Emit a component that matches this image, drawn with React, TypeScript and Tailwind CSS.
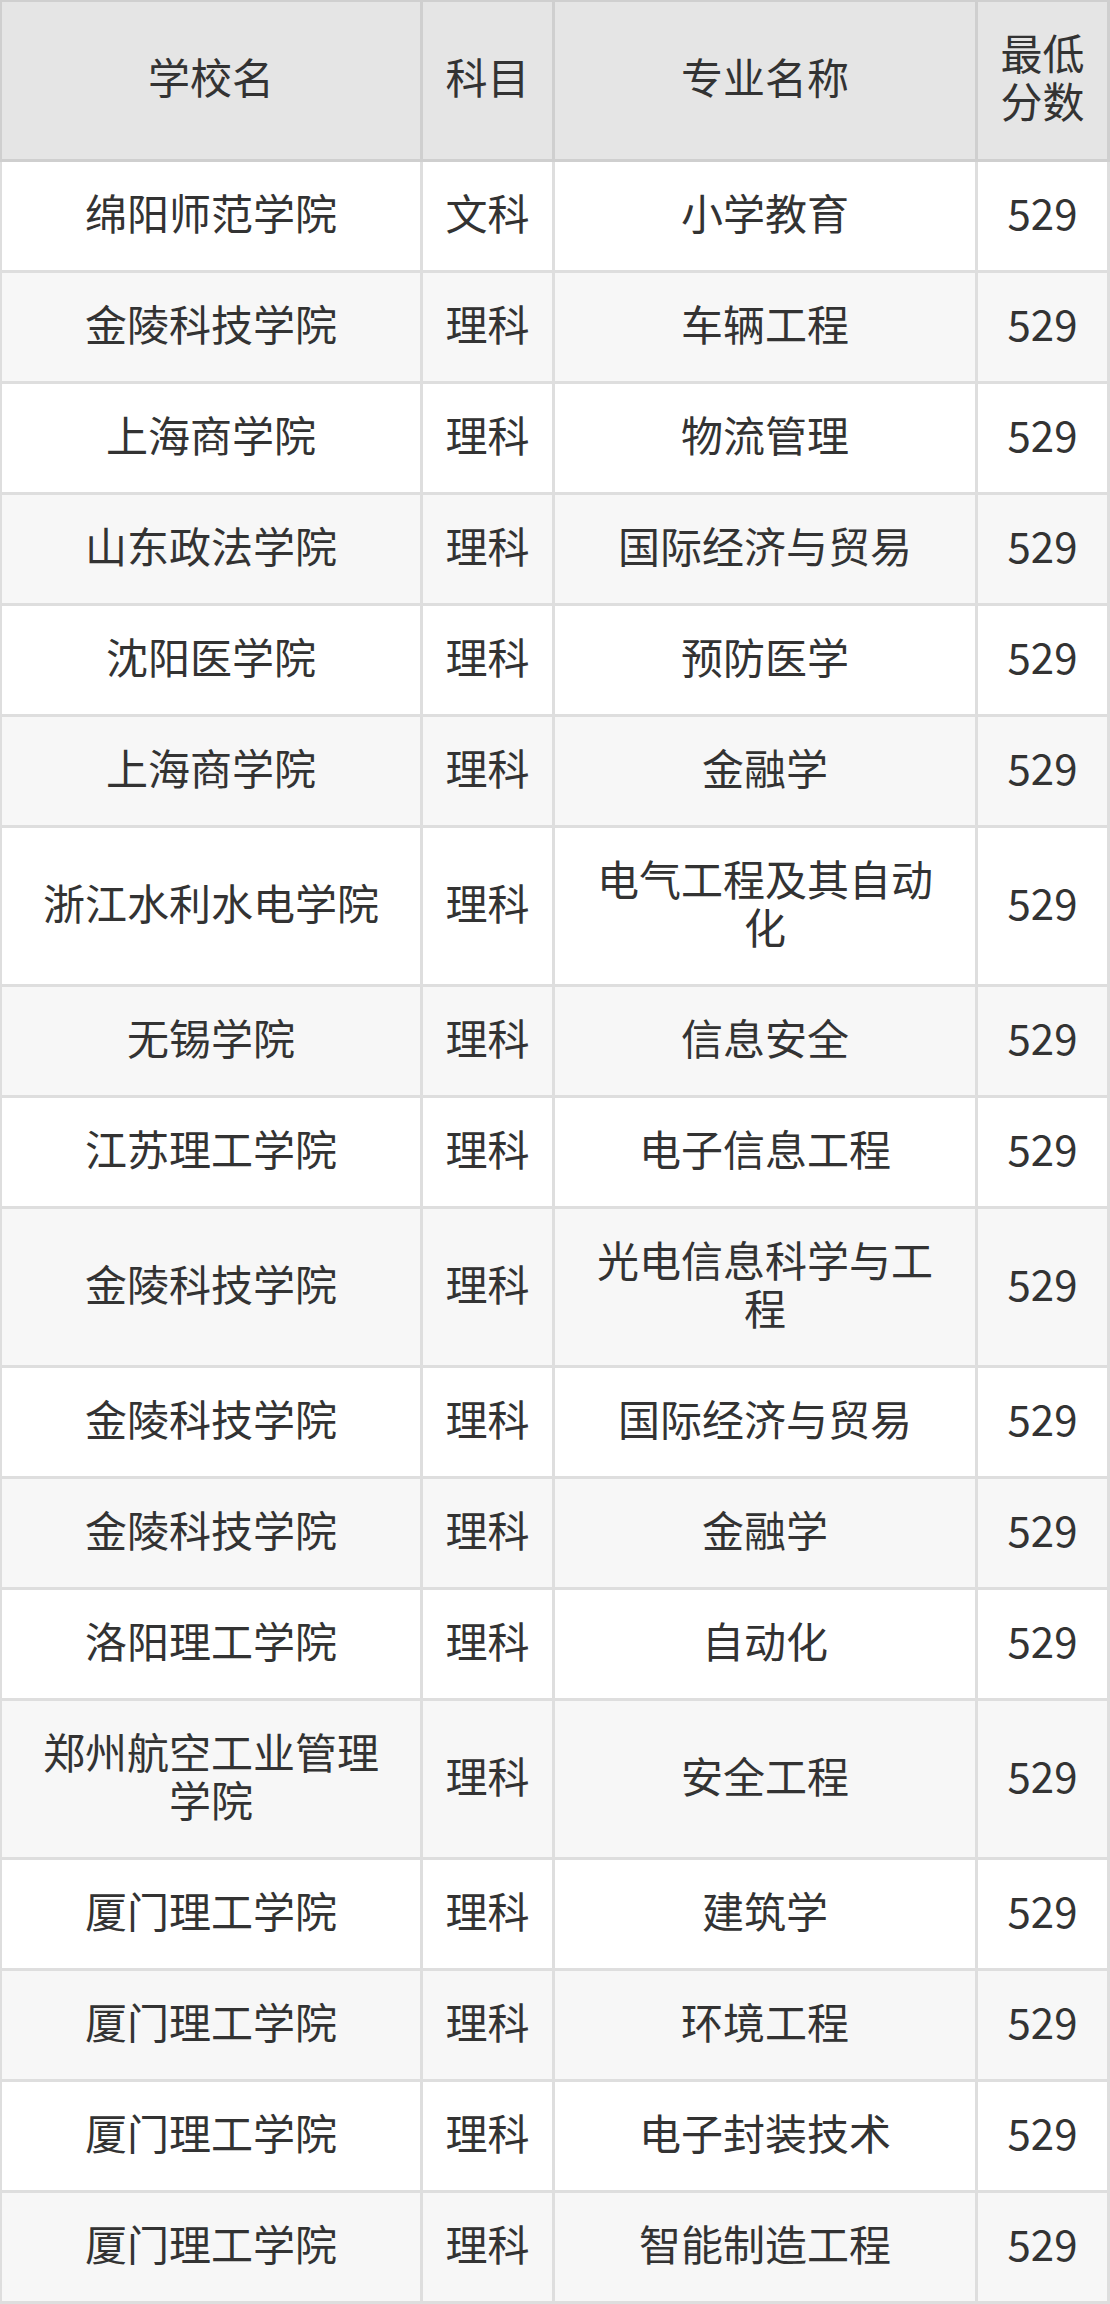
import React from "react";

const rows: [string, string, string, string][] = [
  ["绵阳师范学院", "文科", "小学教育", "529"],
  ["金陵科技学院", "理科", "车辆工程", "529"],
  ["上海商学院", "理科", "物流管理", "529"],
  ["山东政法学院", "理科", "国际经济与贸易", "529"],
  ["沈阳医学院", "理科", "预防医学", "529"],
  ["上海商学院", "理科", "金融学", "529"],
  ["浙江水利水电学院", "理科", "电气工程及其自动化", "529"],
  ["无锡学院", "理科", "信息安全", "529"],
  ["江苏理工学院", "理科", "电子信息工程", "529"],
  ["金陵科技学院", "理科", "光电信息科学与工程", "529"],
  ["金陵科技学院", "理科", "国际经济与贸易", "529"],
  ["金陵科技学院", "理科", "金融学", "529"],
  ["洛阳理工学院", "理科", "自动化", "529"],
  ["郑州航空工业管理学院", "理科", "安全工程", "529"],
  ["厦门理工学院", "理科", "建筑学", "529"],
  ["厦门理工学院", "理科", "环境工程", "529"],
  ["厦门理工学院", "理科", "电子封装技术", "529"],
  ["厦门理工学院", "理科", "智能制造工程", "529"],
];

const padX = ["px-[24px] border-l-[2px]", "px-[12px]", "px-[24px]", "px-[12px]"];

export default function App() {
  return (
    <div
      className="w-[1110px] text-[#333] text-[42px] leading-[48px]"
      style={{ fontFamily: '"Noto Sans CJK SC", "Noto Sans", sans-serif' }}
    >
      <div className="grid grid-cols-[423px_132px_423px_132px]">
        {["学校名", "科目", "专业名称", "最低分数"].map((h, i) => (
          <div
            key={h}
            className={`flex items-center justify-center text-center bg-[#e5e5e5] border-t-[2px] border-r-[3px] border-b-[3px] border-[#cfcfcf] pt-[26px] pb-[35px] ${padX[i]}`}
          >
            {h}
          </div>
        ))}
        {rows.map((r, ri) =>
          r.map((c, ci) => (
            <div
              key={`${ri}-${ci}`}
              className={`flex items-center justify-center text-center border-r-[3px] border-b-[3px] border-[#dedede] pt-[26px] pb-[34px] ${padX[ci]} ${
                ri % 2 === 1 ? "bg-[#f7f7f7]" : "bg-white"
              }`}
            >
              {c}
            </div>
          ))
        )}
      </div>
    </div>
  );
}
